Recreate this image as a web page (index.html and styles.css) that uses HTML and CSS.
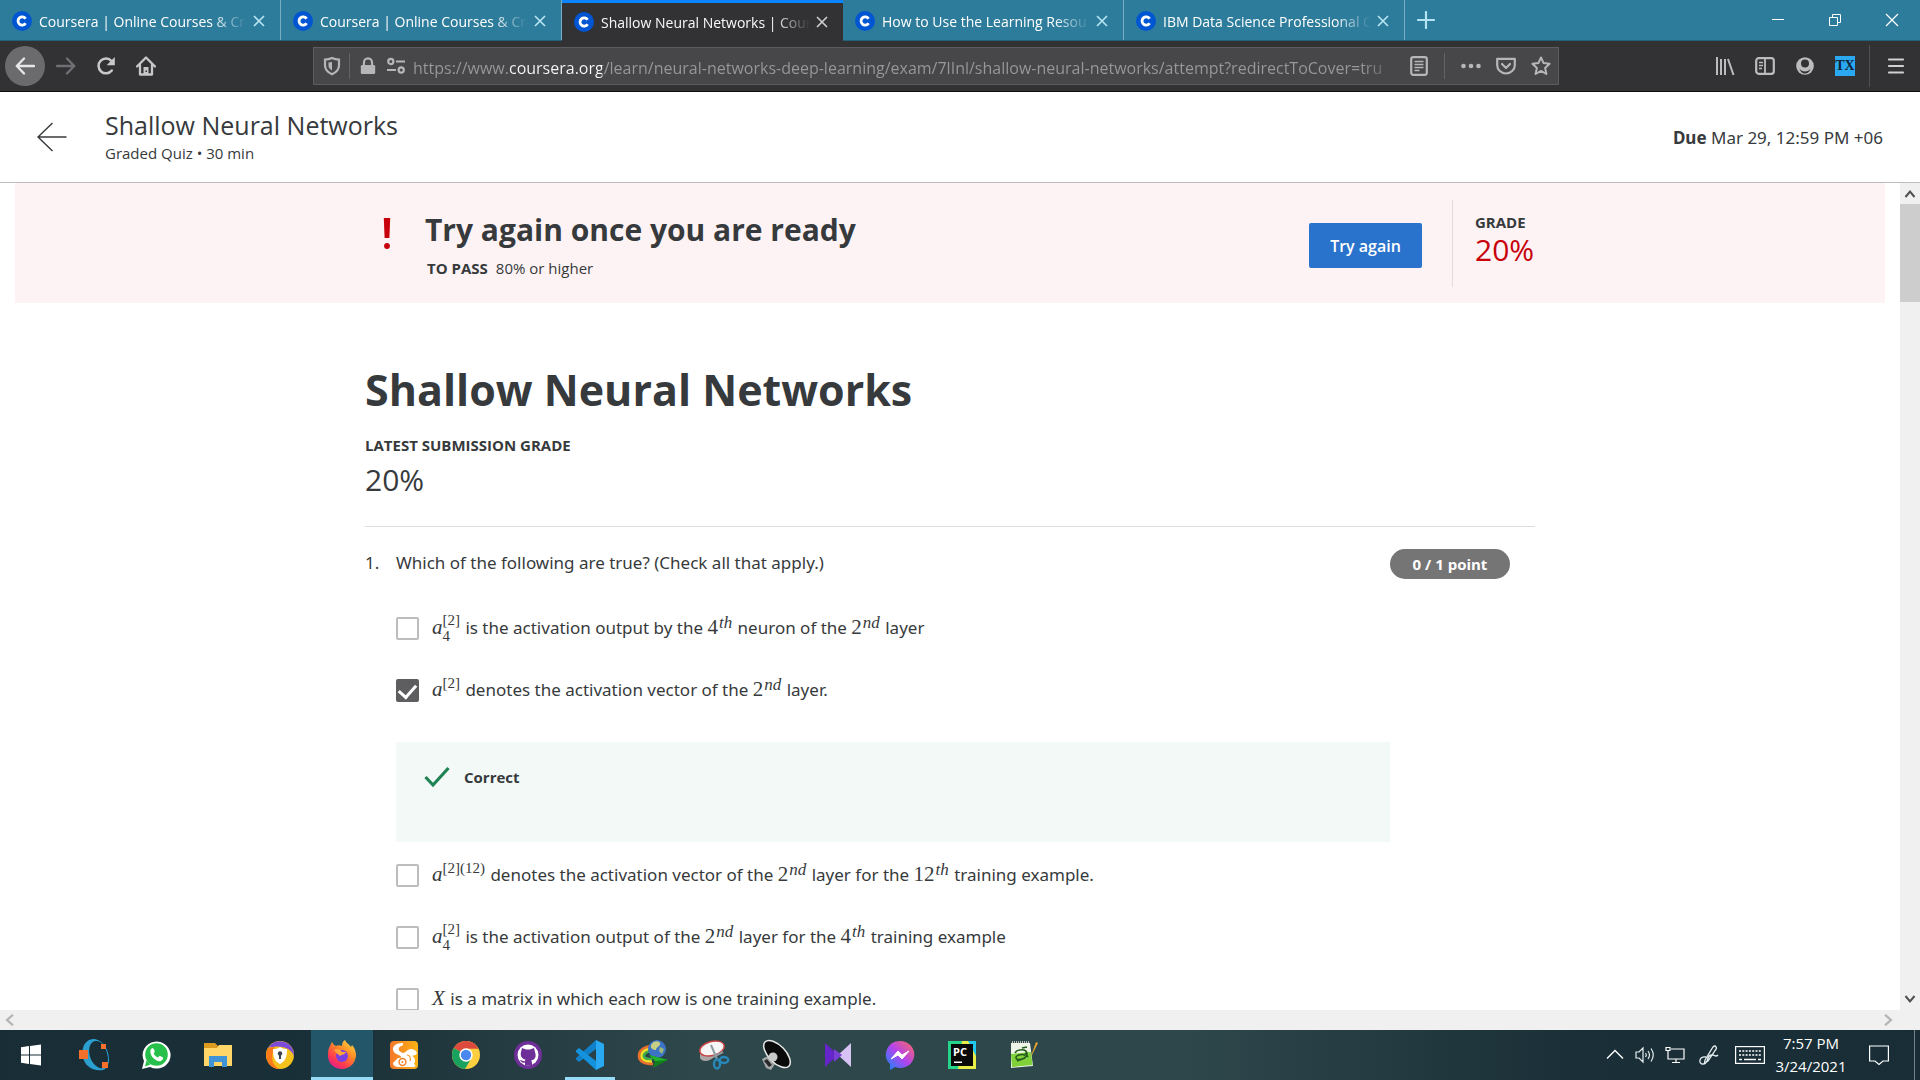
FILE: index.html
```html
<!DOCTYPE html>
<html lang="en">
<head>
<meta charset="utf-8">
<title>Shallow Neural Networks | Coursera</title>
<link rel="stylesheet" href="styles.css">
</head>
<body>
<svg class="defs" aria-hidden="true">
  <symbol id="coursera" viewBox="0 0 20 20"><circle cx="10" cy="10" r="10" fill="#0056d2"/><path d="M13.6 12.2A4.1 4.1 0 1 1 13.6 7.8" fill="none" stroke="#fff" stroke-width="2.8"/></symbol>
  <symbol id="close" viewBox="0 0 12 12"><path d="M1 1l10 10M11 1L1 11" fill="none" stroke="currentColor" stroke-width="1.6"/></symbol>
</svg>

<div class="tabstrip" role="tablist">
  <div class="tab" role="tab"><svg class="favicon"><use href="#coursera"/></svg><span class="tab-title">Coursera | Online Courses &amp; Cre</span><button class="tab-close" aria-label="Close tab"><svg><use href="#close"/></svg></button></div>
  <div class="tab" role="tab"><svg class="favicon"><use href="#coursera"/></svg><span class="tab-title">Coursera | Online Courses &amp; Cre</span><button class="tab-close" aria-label="Close tab"><svg><use href="#close"/></svg></button></div>
  <div class="tab active" role="tab" aria-selected="true"><svg class="favicon"><use href="#coursera"/></svg><span class="tab-title">Shallow Neural Networks | Cour</span><button class="tab-close" aria-label="Close tab"><svg><use href="#close"/></svg></button></div>
  <div class="tab" role="tab"><svg class="favicon"><use href="#coursera"/></svg><span class="tab-title">How to Use the Learning Resou</span><button class="tab-close" aria-label="Close tab"><svg><use href="#close"/></svg></button></div>
  <div class="tab" role="tab"><svg class="favicon"><use href="#coursera"/></svg><span class="tab-title">IBM Data Science Professional C</span><button class="tab-close" aria-label="Close tab"><svg><use href="#close"/></svg></button></div>
  <button class="new-tab" aria-label="New tab"><svg viewBox="0 0 18 18"><path d="M9 1v16M1 9h16" stroke="#b4e4f4" stroke-width="2.2" stroke-linecap="round"/></svg></button>
  <div class="window-buttons">
    <button aria-label="Minimize"><svg viewBox="0 0 14 14"><path d="M1 6.5h12" stroke="#fff"/></svg></button>
    <button aria-label="Restore"><svg viewBox="0 0 14 14"><path d="M1.500 4.500h8v8h-8zM4.500 4V1.500h8v8H10" fill="none" stroke="#fff"/></svg></button>
    <button aria-label="Close window"><svg viewBox="0 0 14 14"><path d="M1 1l12 12M13 1L1 13" stroke="#fff" stroke-width="1.200"/></svg></button>
  </div>
</div>

<div class="toolbar">
  <button class="tool back" aria-label="Back"><svg viewBox="0 0 20 20"><path d="M19 10H2M9 2.500L1.800 10 9 17.500" fill="none" stroke="#e6e6e8" stroke-width="2.400" stroke-linecap="round" stroke-linejoin="round"/></svg></button>
  <button class="tool" aria-label="Forward"><svg viewBox="0 0 20 20"><path d="M1 10h17M11 2.500L18.200 10 11 17.500" fill="none" stroke="#707074" stroke-width="2.400" stroke-linecap="round" stroke-linejoin="round"/></svg></button>
  <button class="tool" aria-label="Reload"><svg viewBox="0 0 20 20"><path d="M15.800 14.500A7.400 7.400 0 1 1 15.500 5" fill="none" stroke="#c8c8ca" stroke-width="2.500" stroke-linecap="round"/><path d="M18.800 1v8.200H10.600z" fill="#c8c8ca"/></svg></button>
  <button class="tool" aria-label="Home"><svg viewBox="0 0 20 20"><path d="M1 10.500L10 1.500l9 9M4 9v9.500h12V9" fill="none" stroke="#c8c8ca" stroke-width="2.300" stroke-linejoin="round" stroke-linecap="round"/><path d="M7.500 18v-7h5v7z" fill="#c8c8ca"/><path d="M9.500 14.500h1.500v1.500h-1.500z" fill="#323234"/></svg></button>

  <div class="urlbar">
    <button class="url-icon shield" aria-label="Tracking protection"><svg viewBox="0 0 20 20"><path d="M10 2C7.500 3.200 5 3.600 3 3.600v5.700c0 4.500 3 7.200 7 8.900 4-1.700 7-4.400 7-8.900V3.600c-2 0-4.500-.4-7-1.600z" fill="none" stroke="#b6b6b8" stroke-width="2.200"/><path d="M10 6v8.500C7.500 13 6.500 11.500 6.500 9.500V6.500z" fill="#b6b6b8"/></svg></button>
    <span class="url-divider"></span>
    <button class="url-icon lock" aria-label="Site security"><svg viewBox="0 0 20 20"><rect x="2" y="9" width="16" height="10" rx="1.500" fill="#b6b6b8"/><path d="M5.500 9.500V6a4.500 4.500 0 0 1 9 0v3.500" fill="none" stroke="#b6b6b8" stroke-width="2.400"/></svg></button>
    <button class="url-icon perms" aria-label="Permissions"><svg viewBox="0 0 20 20"><g fill="none" stroke="#b6b6b8" stroke-width="2.200"><circle cx="4.800" cy="5.500" r="2.600"/><path d="M10 5.500h9M1 14h9"/><circle cx="15.200" cy="14" r="2.600"/></g></svg></button>
    <input class="url-text" type="text" aria-label="Address" value="https://www.coursera.org/learn/neural-networks-deep-learning/exam/7lInl/shallow-neural-networks/attempt?redirectToCover=tru">
    <button class="url-icon" aria-label="Reader view"><svg viewBox="0 0 20 20"><rect x="2.200" y="1.200" width="15.600" height="17.600" rx="2" fill="none" stroke="#b6b6b8" stroke-width="2.200"/><path d="M5.500 5.500h9M5.500 8.500h9M5.500 11.500h9M5.500 14.500h5" stroke="#b6b6b8" stroke-width="1.400"/></svg></button>
    <span class="url-divider wide"></span>
    <button class="url-icon" aria-label="Page actions"><svg viewBox="0 0 20 20"><g fill="#b6b6b8"><circle cx="2.500" cy="10" r="2.300"/><circle cx="10" cy="10" r="2.300"/><circle cx="17.500" cy="10" r="2.300"/></g></svg></button>
    <button class="url-icon" aria-label="Save to Pocket"><svg viewBox="0 0 20 20"><path d="M1.200 2.800h17.600v6.400a8.800 8.300 0 0 1-17.600 0z" fill="none" stroke="#b6b6b8" stroke-width="2.200" stroke-linejoin="round"/><path d="M6 8l4 4 4-4" fill="none" stroke="#b6b6b8" stroke-width="2.200" stroke-linecap="round" stroke-linejoin="round"/></svg></button>
    <button class="url-icon" aria-label="Bookmark"><svg viewBox="0 0 20 20"><path d="M10 1.500l2.600 5.600 6 .7-4.500 4.100 1.300 6.100-5.400-3.100L4.600 18l1.300-6.100L1.400 7.800l6-.7z" fill="none" stroke="#b6b6b8" stroke-width="2" stroke-linejoin="round"/></svg></button>
  </div>

  <div class="tools-right">
    <button class="tool" aria-label="Library"><svg viewBox="0 0 20 20"><path d="M2 1v18M6 3v16M10 3v16M13 3l5.500 16" stroke="#bcbcbe" stroke-width="2" fill="none"/></svg></button>
    <button class="tool" aria-label="Sidebars"><svg viewBox="0 0 20 20"><rect x="1.200" y="2.200" width="17.600" height="15.600" rx="2.500" fill="none" stroke="#bcbcbe" stroke-width="2.200"/><path d="M10 2v16" stroke="#bcbcbe" stroke-width="1.800"/><path d="M4 6.500h4M4 9.500h4M4 12.500h3" stroke="#bcbcbe" stroke-width="1.400"/></svg></button>
    <button class="tool" aria-label="Account"><svg viewBox="0 0 20 20"><circle cx="10" cy="10" r="8.800" fill="#bcbcbe"/><circle cx="10" cy="7.500" r="4" fill="#323234"/><path d="M4.500 12.500c2 4 9 4 11 0-1 4-3.500 5-5.500 5s-4.500-1-5.500-5z" fill="#323234"/></svg></button>
    <button class="tool" aria-label="Extension"><span class="tx">TX</span></button>
    <span class="tool-divider"></span>
    <button class="tool menu" aria-label="Menu"><svg viewBox="0 0 20 20"><path d="M3 3.500h14M3 10h14M3 16.500h14" stroke="#d0d0d2" stroke-width="2.200" stroke-linecap="round"/></svg></button>
  </div>
</div>

<header class="quiz-header">
  <a class="quiz-back" href="#" aria-label="Back"><svg viewBox="0 0 30 30"><path d="M29.500 15H1M15.500 1L1 15l14.500 14" fill="none" stroke="#373a3c" stroke-width="1.400"/></svg></a>
  <div class="quiz-name">
    <div class="quiz-title">Shallow Neural Networks</div>
    <div class="quiz-sub">Graded Quiz • 30 min</div>
  </div>
  <div class="quiz-due"><b>Due</b> Mar 29, 12:59 PM +06</div>
</header>

<div class="viewport">
  <main class="page">
    <section class="banner">
      <div class="banner-inner">
        <svg class="alert" viewBox="0 0 8 31"><path d="M.8 0h6.400l-.8 20H1.600z" fill="#c7000b"/><circle cx="4" cy="28" r="2.900" fill="#c7000b"/></svg>
        <div class="banner-text">
          <h2>Try again once you are ready</h2>
          <p><b>TO PASS</b>80% or higher</p>
        </div>
        <button class="try">Try again</button>
        <div class="grade"><b>GRADE</b><span>20%</span></div>
      </div>
    </section>

    <section class="quiz">
      <h1>Shallow Neural Networks</h1>
      <div class="latest-label">LATEST SUBMISSION GRADE</div>
      <div class="latest-grade">20%</div>

      <div class="question">
        <div class="num">1.</div>
        <div class="q-body">
          <p class="prompt">Which of the following are true? (Check all that apply.)</p>
          <label class="option"><input type="checkbox"><span><span class="math"><i>a</i><span class="scripts"><span>[2]</span><span>4</span></span></span> is the activation output by the <span class="math">4<sup><i>th</i></sup></span> neuron of the <span class="math">2<sup><i>nd</i></sup></span> layer</span></label>
          <label class="option"><input type="checkbox" checked><span><span class="math"><i>a</i><sup>[2]</sup></span> denotes the activation vector of the <span class="math">2<sup><i>nd</i></sup></span> layer.</span></label>
          <div class="feedback"><svg viewBox="0 0 26 22"><path d="M1.500 11l7.500 8L24.500 2" fill="none" stroke="#1f8354" stroke-width="3.200"/></svg><b>Correct</b></div>
          <label class="option"><input type="checkbox"><span><span class="math"><i>a</i><sup>[2](12)</sup></span> denotes the activation vector of the <span class="math">2<sup><i>nd</i></sup></span> layer for the <span class="math">12<sup><i>th</i></sup></span> training example.</span></label>
          <label class="option"><input type="checkbox"><span><span class="math"><i>a</i><span class="scripts"><span>[2]</span><span>4</span></span></span> is the activation output of the <span class="math">2<sup><i>nd</i></sup></span> layer for the <span class="math">4<sup><i>th</i></sup></span> training example</span></label>
          <label class="option"><input type="checkbox"><span><span class="math"><i>X</i></span> is a matrix in which each row is one training example.</span></label>
        </div>
        <div class="points"><span>0 / 1 point</span></div>
      </div>
    </section>
  </main>
  <div class="vscroll">
    <svg viewBox="0 0 12 12"><path d="M1.500 9L6 3.500 10.500 9" fill="none" stroke="#505050" stroke-width="2"/></svg>
    <div class="thumb"></div>
    <svg class="down" viewBox="0 0 12 12"><path d="M1.500 3L6 8.500 10.500 3" fill="none" stroke="#505050" stroke-width="2"/></svg>
  </div>
  <div class="hscroll">
    <svg viewBox="0 0 12 12"><path d="M8.500 1.500L3.500 6l5 4.500" fill="none" stroke="#b4b4b4" stroke-width="2"/></svg>
    <svg viewBox="0 0 12 12"><path d="M3.500 1.500l5 4.500-5 4.500" fill="none" stroke="#b4b4b4" stroke-width="2"/></svg>
  </div>
  <div class="corner"></div>
</div>

<footer class="taskbar">
  <button class="app" aria-label="Start"><svg viewBox="0 0 32 32"><path d="M5 8.200l8-1.100v8.400H5zM14 7l11-1.500v10H14zM5 16.500h8v8.400l-8-1.100zM14 16.500h11v10L14 25z" fill="#fff"/></svg></button>
  <button class="app" aria-label="Octave"><svg viewBox="0 0 32 32"><path fill-rule="evenodd" d="M15 0C24 0 31 10 31 20c0 5-2 10-6 11-5 1-11 0-15-4C1 19 3 1 15 0zM17 2C9 4 10 18 16 25c3 3 6 5 9 4 4-2 5-6 5-10C29 9 24 1 17 2z" fill="#2a9fd0"/><path d="M1 11h9v9H1zM23 5h5v5h-5zM24 23h6v6h-6z" fill="#f5702a"/></svg></button>
  <button class="app" aria-label="WhatsApp"><svg viewBox="0 0 32 32"><path d="M2 30l2-8a14 13.500 0 1 1 6 6z" fill="#fff"/><circle cx="16.500" cy="15.500" r="11.300" fill="#27c04a"/><path d="M5 27.500l1.500-6 4 4z" fill="#27c04a"/><path d="M10.500 11c1-2.500 3-2 3.500-.5l.8 2.200-1.200 1.800c1 2 2.400 3.200 4.400 4l1.700-1.700 3.300 1.700c.8 2-2 4-4 3.700-5-1-9.500-6-8.500-11.200z" fill="#fff"/></svg></button>
  <button class="app" aria-label="File Explorer"><svg viewBox="0 0 32 32"><path d="M2 4h11l3 3h14v9H2z" fill="#dc9a1e"/><path d="M2 9h13l2-3h13v21H2z" fill="#ffd667"/><path d="M7 28V17h18v11h-5v-5h-8v5z" fill="#3f94d8"/></svg></button>
  <button class="app" aria-label="Secure Browser"><svg viewBox="0 0 32 32"><circle cx="16" cy="16" r="14" fill="#f5c21b"/><path d="M4 9A14 14 0 0 1 30 17C27 9 17 5 4 9z" fill="#7d4bdc"/><path d="M4 9C0 17 3 29 15 30 8 26 6 18 11 8z" fill="#ff7a18"/><path d="M16 8c3 2 5 2 7 2 0 7-1 12-7 15-6-3-7-8-7-15 2 0 4 0 7-2z" fill="#fff"/><circle cx="16" cy="14.500" r="2.200" fill="#38424d"/><path d="M15 15h2v5h-2z" fill="#38424d"/></svg></button>
  <button class="app current" aria-label="Firefox"><svg viewBox="0 0 32 32"><defs><linearGradient id="ff" x1="1" y1="0" x2=".3" y2="1"><stop offset="0" stop-color="#ffe94a"/><stop offset=".45" stop-color="#ff8a26"/><stop offset=".8" stop-color="#ff3851"/><stop offset="1" stop-color="#e3208a"/></linearGradient></defs><path d="M4 7c1-2 1-3 2-4 1 2 2 3 4 4 2-1 4-1 6 0 0-3 1-5 3-6 1 3 4 4 6 7l1-2c3 3 4 7 4 11-1 8-7 13-14 13C8 30 2 24 2 17c0-4 0-7 2-10z" fill="url(#ff)"/><circle cx="16" cy="17" r="6" fill="#7a3fe0"/><path d="M8 11c3-2 6-1 8 2h4c-1 3-4 2-6 4-1-1-4-3-6-6z" fill="#ffa436"/></svg></button>
  <button class="app" aria-label="UC Browser"><svg viewBox="0 0 32 32"><defs><linearGradient id="uc" x1="0" y1="0" x2="1" y2="0"><stop offset="0" stop-color="#f5782a"/><stop offset="1" stop-color="#fbb413"/></linearGradient></defs><rect x="2" y="2" width="28" height="28" rx="4" fill="url(#uc)"/><path d="M15 4C6 4 3 9 6 13c2 3 7 3 7 5 0 1-1 1-3 1l-5 5c0 3 3 4 6 4h14c3 0 3-2 1-3 2-3 1-7-2-8 1-1 4 0 5-3-1-3-4-4-6-4-4 0-5 4-8 4-3-1-5-3-4-5 1-3 5-1 4-5z" fill="#fff"/><circle cx="14.500" cy="23" r="3.400" fill="#fff" stroke="#f5842a" stroke-width="1.500"/><circle cx="14.500" cy="23" r="1" fill="#f5842a"/><path d="M19 16c3 0 4 3 3 6" fill="none" stroke="#f9982a" stroke-width="1.200"/></svg></button>
  <button class="app" aria-label="Chrome"><svg viewBox="0 0 32 32"><circle cx="16" cy="16" r="14" fill="#fdce3f"/><path d="M16 16L3.900 9A14 14 0 0 1 28.500 9.800H16z" fill="#dc4a3d"/><path d="M16 16L3.900 9A14 14 0 0 0 15 30l6.500-11z" fill="#19a15f"/><circle cx="16" cy="16" r="6.700" fill="#fff"/><circle cx="16" cy="16" r="5.200" fill="#4a88ee"/></svg></button>
  <button class="app" aria-label="GitHub Desktop"><svg viewBox="0 0 32 32"><circle cx="16" cy="16" r="14" fill="#6e2f99"/><circle cx="16" cy="16" r="10.500" fill="#fff"/><path d="M10 9l4 1.500h4L22 9l1 4c2 6-1 8-4 8.500 1 1 1 2 1 5h-7v-3c-3 1-4-1-5-2.500 2-.5 3 2 5 1 0-.5 0-1 .5-1.500C10 20 8 17 9 13z" fill="#6e2f99"/></svg></button>
  <button class="app running" aria-label="Visual Studio Code"><svg viewBox="0 0 32 32"><path d="M22 1l8 4v22l-8 4z" fill="#29a9f2"/><path d="M22 1v9L5 23l-3-2.500V19z" fill="#1180c8"/><path d="M22 31v-9L5 9 2 11.500V13z" fill="#1592dd"/></svg></button>
  <button class="app" aria-label="Internet Download Manager"><svg viewBox="0 0 32 32"><g fill="none" stroke-width="2.500"><path d="M19 7C9 6 2 12 3 18c1 6 7 7 14 7" stroke="#e8702a"/><path d="M19 9.500C10 9 5 13 5.500 17.500c.5 4 5 5 10.500 5" stroke="#f3e02c"/><path d="M18 12c-6 0-10 2-10 5 0 3 4 3 8 3" stroke="#3fb04c"/></g><circle cx="21" cy="10" r="9" fill="#3d73c4"/><path d="M15 6c3-5 8-4 9-2 1 3-4 4-4 7-3 0-6-2-5-5z" fill="#c6cf83"/><path d="M24 8l4 2-2 5-3-3z" fill="#9db87a"/><path d="M13 16l19 5-15 8 2-7z" fill="#127d1b"/><path d="M13 16l19 5-13 1z" fill="#22b32b"/></svg></button>
  <button class="app" aria-label="Snipping Tool"><svg viewBox="0 0 32 32"><path d="M2 14v5c2 5 11 3 14-1l3-8z" fill="#aaa6a6"/><ellipse cx="14" cy="9.500" rx="12.500" ry="7" fill="#f6f6f6" stroke="#c94343" stroke-width="1.400" transform="rotate(-15 14 9.500)"/><path d="M13 6l6 14M25 13l-10 5" stroke="#8f9aa1" stroke-width="2"/><ellipse cx="19" cy="25" rx="3" ry="4.500" fill="none" stroke="#2789bb" stroke-width="2.400"/><ellipse cx="26" cy="21" rx="4.300" ry="3" fill="none" stroke="#2789bb" stroke-width="2.400"/></svg></button>
  <button class="app" aria-label="Speaker"><svg viewBox="0 0 32 32"><path d="M2 20l6-3 7 8-4 6-5-2z" fill="#a6a8a8"/><path d="M4 22l3-2 5 6-3 2z" fill="#27292a"/><ellipse cx="17" cy="15" rx="8.500" ry="17" fill="#0a0a0a" stroke="#e8e8e8" stroke-width="1.500" transform="rotate(-44 17 15)"/><circle cx="13" cy="18" r="4.500" fill="#c8caca"/></svg></button>
  <button class="app" aria-label="Visual Studio"><svg viewBox="0 0 32 32"><path d="M3 4l13 12L3 28z" fill="#6526c9"/><path d="M29 4L16 16l13 12z" fill="#d6c3f4"/><path d="M12 10l8 6-8 7z" fill="#7a3fd5"/></svg></button>
  <button class="app" aria-label="Messenger"><svg viewBox="0 0 32 32"><defs><linearGradient id="ms" x1="1" y1="0" x2="0" y2="1"><stop offset="0" stop-color="#ff6a60"/><stop offset=".5" stop-color="#b243ed"/><stop offset="1" stop-color="#0b8dff"/></linearGradient></defs><path d="M16 2a14 13.500 0 1 1-5 26l-5 3v-6A14 13.500 0 0 1 16 2z" fill="url(#ms)"/><path d="M7 20l7-8 4 4 7-4-7 8-4-4z" fill="#fff" stroke="#fff"/></svg></button>
  <button class="app" aria-label="PyCharm"><svg viewBox="0 0 32 32"><path d="M2 2h28v28H2z" fill="#25d38b"/><path d="M16 2h14v28H12z" fill="#e8ee45"/><path d="M22 2h8v15z" fill="#21c7ec"/><path d="M5 5h22v22H5z" fill="#090909"/><path d="M8 22.500h8V24H8z" fill="#fff"/><text x="7" y="17" class="pc">PC</text></svg></button>
  <button class="app" aria-label="Notepad++"><svg viewBox="0 0 32 32"><path d="M3 4h19l3 23-22 2z" fill="#eef3e8"/><path d="M3 15l20-2 1.500 13L4 28z" fill="#80d13a"/><path d="M7 14c2-4 12-5 12 1 0 5-10 7-11 4s8-5 9-2M9 22l8-3M14 9l5-1M17 14l3 4" fill="none" stroke="#245a1c" stroke-width="1.500"/><path d="M28 3l2 1-6 12-1 1z" fill="#e7a630"/><path d="M4 3h18" stroke="#b6b9b6" stroke-width="2" stroke-dasharray="1 1"/></svg></button>

  <div class="tray">
    <button class="tray-icon" aria-label="Show hidden icons"><svg viewBox="0 0 20 20"><path d="M2 13.500l8-8 8 8" fill="none" stroke="#fff" stroke-width="1.400"/></svg></button>
    <button class="tray-icon" aria-label="Volume"><svg viewBox="0 0 20 20"><path d="M1 7h3l4-4v14l-4-4H1zM10.500 8q1.500 2 0 4M13 6q3 4 0 8M16 3.500q4.500 6.500 0 13" fill="none" stroke="#e6eef0" stroke-width="1.200"/></svg></button>
    <button class="tray-icon" aria-label="Network"><svg viewBox="0 0 20 20"><path d="M6 4h13v10H3V9M11 14v3M7 17.500h8M1 2.500h4v3H1zM3 5.500V9" fill="none" stroke="#fff" stroke-width="1.200"/></svg></button>
    <button class="tray-icon pen" aria-label="Windows Ink"><svg viewBox="0 0 20 20"><path d="M6 15L14 2q2-2 3 0 1 1-.5 3L9 16l-3.500 2zM7 12c-7-1-8 7-3 7 6 0 3-8 8-9 4-1 4 3 7 0" fill="none" stroke="#e6eef0" stroke-width="1.300"/></svg></button>
    <button class="tray-icon keyboard" aria-label="Touch keyboard"><svg viewBox="0 0 30 18"><rect x=".6" y=".6" width="28.800" height="16.800" fill="none" stroke="#fff" stroke-width="1.200"/><path d="M4 5h22M4 9h22" stroke="#fff" stroke-width="1.500" stroke-dasharray="2 1.300"/><path d="M4 13.500h3M9 13.500h12M23 13.500h3" stroke="#fff" stroke-width="1.500"/></svg></button>
    <div class="clock"><span>7:57 PM</span><span>3/24/2021</span></div>
    <button class="tray-icon notice" aria-label="Notifications"><svg viewBox="0 0 20 20"><path d="M.6 1h18.800v15H14l-4 3.500L6 16H.6z" fill="none" stroke="#fff" stroke-width="1.200"/></svg></button>
    <span class="peek"></span>
  </div>
</footer>
</body>
</html>
```

FILE: styles.css
```css
* { box-sizing: border-box; }
html, body { height: 100%; }
body {
  margin: 0;
  display: flex;
  flex-direction: column;
  overflow: hidden;
  background: #fff;
  color: #373a3c;
  font-family: "Open Sans", "Noto Sans", sans-serif;
  font-size: 17px;
}
button { border: 0; padding: 0; background: none; font: inherit; color: inherit; }
svg { display: block; }
h1, h2, p { margin: 0; }
.defs { position: absolute; width: 0; height: 0; }

/* tab strip */
.tabstrip { flex: none; display: flex; height: 41px; background: #2d7c9b; border-bottom: 1px solid #23617a; color: #fff; }
.tab { flex: 0 1 281px; min-width: 0; display: flex; align-items: center; padding: 2px 15px 0 12px; border-right: 1px solid #79adc1; }
.favicon { flex: none; width: 20px; height: 20px; margin-right: 7px; }
.tab-title {
  flex: 1; min-width: 0; overflow: hidden; white-space: nowrap; padding-top: 1px; font: 14px/24px "Open Sans", sans-serif;
  -webkit-mask-image: linear-gradient(to left, transparent 0, #000 36px);
  mask-image: linear-gradient(to left, transparent 0, #000 36px);
}
.tab-close { flex: none; width: 12px; height: 12px; margin-left: 6px; color: #b9e6f5; }
.tab-close svg { width: 12px; height: 12px; }
.tab.active { height: 41px; background: #323234; border-top: 3px solid #0a84ff; border-right: 0; padding-top: 0; color: #f9f9fa; }
.tab.active .tab-close { color: #d0d0d2; }
.new-tab { display: flex; align-items: center; padding: 0 12px; }
.new-tab svg { width: 18px; height: 18px; }
.window-buttons { margin-left: auto; display: flex; }
.window-buttons button { width: 57px; display: flex; align-items: center; justify-content: center; }
.window-buttons svg { width: 14px; height: 14px; }

/* toolbar */
.toolbar { flex: none; display: flex; align-items: center; height: 51px; padding: 0 4px 0 5px; background: #323234; border-bottom: 1px solid #0c0c0d; }
.tool { flex: none; width: 40px; height: 40px; display: flex; align-items: center; justify-content: center; }
.tool svg { width: 20px; height: 20px; }
.tool.back { margin-right: 1px; border-radius: 50%; background: #6b6b6d; }
.urlbar { flex: 1; min-width: 0; height: 38px; margin: 0 146px 0 147px; display: flex; align-items: center; background: #474749; border: 1px solid #5c5c5e; }
.url-icon { flex: none; width: 35px; height: 36px; display: flex; align-items: center; justify-content: center; }
.url-icon svg { width: 20px; height: 20px; }
.url-icon.perms { width: 22px; margin-right: 6px; }
.url-icon.lock svg { width: 18px; height: 18px; }
.url-divider { width: 1px; height: 26px; background: #636365; }
.url-divider.wide { margin: 0 8px; }
.url-text {
  flex: 1; min-width: 0; height: 32px; padding: 4px 0 0; border: 0; outline: 0;
  font: 16px/28px "Open Sans", sans-serif;
  color: transparent;
  background: linear-gradient(to right, #98989a 0 95px, #f9f9fa 95px 189px, #98989a 189px calc(100% - 40px), transparent 100%);
  -webkit-background-clip: text;
  background-clip: text;
}
.tools-right { display: flex; align-items: center; }
.tx { width: 20px; height: 20px; background: #2aa8f2; color: #10253a; font: bold 14px/20px "Liberation Serif", serif; text-align: center; }
.tool-divider { width: 1px; height: 42px; margin: 0 6px 0 4px; background: #505052; }

/* quiz header */
.quiz-header { flex: none; display: flex; align-items: center; height: 91px; padding: 0 37px; border-bottom: 1px solid #bdbdbd; }
.quiz-back { width: 30px; height: 30px; margin-right: 38px; }
.quiz-back svg { width: 30px; height: 30px; }
.quiz-title { font-size: 25px; line-height: 32px; }
.quiz-sub { font-size: 15px; line-height: 24px; }
.quiz-due { margin-left: auto; font-family: "Noto Sans", sans-serif; }

/* page and its scrollbars */
.viewport { flex: 1; min-height: 0; display: grid; grid-template: minmax(0, 1fr) 20px / minmax(0, 1fr) 20px; }
.page { overflow: hidden; padding: 0 15px; }
.vscroll { display: flex; flex-direction: column; align-items: center; background: #f0f0f0; padding: 5px 0; }
.vscroll svg { width: 12px; height: 12px; }
.thumb { width: 20px; height: 98px; margin-top: 4px; background: #cdcdcd; }
.vscroll .down { margin-top: auto; }
.hscroll { display: flex; align-items: center; justify-content: space-between; padding: 0 5px 0 3px; background: #f0f0f0; }
.hscroll svg { width: 14px; height: 14px; }
.corner { background: #f0f0f0; }

/* result banner */
.banner { background: #fdf3f4; }
.banner-inner { max-width: 1170px; height: 120px; margin: 0 auto; padding: 17px 0 16px 18px; display: flex; align-items: center; }
.alert { align-self: flex-start; width: 8px; height: 31px; margin: 18px 34px 0 0; }
.banner-text { align-self: flex-start; flex: 1; }
.banner-text h2 { font-size: 30px; line-height: 40px; margin-top: 10px; font-weight: 700; }
.banner-text p { margin: 7px 0 0 2px; font-size: 15px; line-height: 22px; }
.banner-text b { margin-right: 8px; }
.try { width: 113px; height: 45px; margin: 4px 30px 0 0; border-radius: 2px; background: #2a73cc; color: #fff; font-size: 16px; font-weight: 600; }
.grade { align-self: stretch; width: 83px; padding: 11px 0 0 22px; border-left: 1px solid #e4dadb; }
.grade b { display: block; font-size: 15px; line-height: 22px; }
.grade span { display: block; font-size: 30px; line-height: 34px; color: #c7000b; }

/* quiz */
.quiz { max-width: 1170px; margin: 0 auto; padding-top: 56px; }
.quiz h1 { font-size: 43px; line-height: 62px; font-weight: 700; }
.latest-label { margin-top: 13px; font-size: 15px; line-height: 22px; font-weight: 700; }
.latest-grade { margin-top: 4px; font-size: 30px; line-height: 40px; }
.question { display: grid; grid-template-columns: 31px 1fr 145px; margin-top: 26px; padding-top: 22px; border-top: 1px solid #dcdcdc; font-family: "Noto Sans", sans-serif; line-height: 28px; }
.prompt { margin-bottom: 20px; }
.option { display: flex; align-items: center; height: 62px; white-space: nowrap; }
.option input { appearance: none; flex: none; display: grid; place-items: center; width: 23px; height: 23px; margin: 0 13px 0 0; border: 2px solid #bdbdbd; border-radius: 2px; background: #fff; }
.option input:checked { background: #5e5e60; border-color: #5e5e60; }
.option input:checked::before { content: ""; width: 8px; height: 14px; margin-bottom: 4px; border: solid #fff; border-width: 0 3px 3px 0; transform: rotate(42deg); }
.math { margin-right: 1px; font: 21px/20px "Liberation Serif", serif; }
.math sup { font-size: 15px; line-height: 0; vertical-align: 8px; }
.math sup i { font-size: 17px; vertical-align: -2px; margin-left: 1px; }
.scripts { display: inline-flex; flex-direction: column; vertical-align: 9px; font-size: 15px; line-height: 16px; }
.feedback { display: flex; height: 100px; margin: 21px 0 2px; padding: 24px 28px; background: #f3f9f7; font-family: "Open Sans", sans-serif; font-size: 15px; line-height: 22px; }
.feedback svg { width: 26px; height: 22px; margin-right: 14px; }
.points span { display: block; width: 120px; height: 30px; border-radius: 15px; background: #757575; color: #fff; font: 700 15px/30px "Open Sans", sans-serif; text-align: center; }

/* taskbar */
.taskbar { flex: none; display: flex; height: 50px; padding-left: 1px; background: linear-gradient(to right, #182d36 0, #1a3038 17%, #2e474b 36%, #2e474b 62%, #1a2f37 82%, #182d36 100%); color: #fff; }
.app { flex: 0 1 62px; min-width: 0; display: flex; align-items: center; justify-content: center; border-bottom: 3px solid transparent; padding-top: 3px; }
.app svg { width: 32px; height: 32px; }
.app.current { background: #24566a; border-color: #97dcf6; }
.app.running { margin: 0 6px; flex-basis: 50px; border-color: #97dcf6; }
.pc { font: bold 11px "Open Sans", sans-serif; fill: #fff; }
.tray { margin-left: auto; display: flex; align-items: center; }
.tray-icon { width: 30px; height: 50px; display: flex; align-items: center; justify-content: center; }
.tray-icon svg { width: 20px; height: 20px; }
.tray-icon.pen { width: 38px; }
.tray-icon.keyboard { width: 44px; }
.tray-icon.keyboard svg { width: 30px; height: 18px; }
.clock { width: 78px; display: flex; flex-direction: column; text-align: center; font-size: 15px; line-height: 23px; }
.tray-icon.notice { width: 58px; }
.peek { width: 1px; height: 50px; margin: 0 5px 0 6px; background: #73838a; }
```
